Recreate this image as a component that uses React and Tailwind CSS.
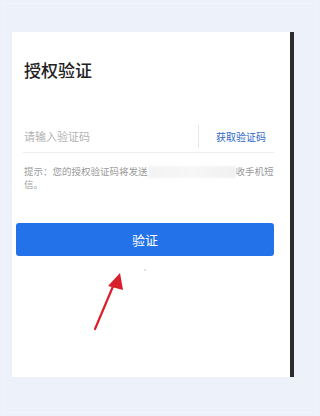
import React from "react";

// Auth verification card with annotation arrow
export default function App() {
  return (
    <div
      className="relative w-[320px] h-[416px] bg-[#edf1f9] pt-[32px] pl-[12px]"
      style={{ fontFamily: '"Noto Sans CJK SC", "Noto Sans", sans-serif' }}
    >
      {/* faint frame */}
      <div className="absolute left-[3px] top-[3px] w-[313px] h-[410px] border border-[#f2f5fb] pointer-events-none"></div>

      <div className="relative w-[282px] h-[345px] bg-white border-r-4 border-[#2b2b2b] flex flex-col">
        <h1 className="mt-[26px] ml-[12px] text-[17px] leading-[24px] font-medium text-[#222]">授权验证</h1>

        {/* code input */}
        <div className="mt-[39px] ml-[11px] w-[251px] h-[32px] border-b border-[#eceef2] flex items-center">
          <span className="flex-1 pl-[1px] text-[11px] text-[#b3b3b3]">请输入验证码</span>
          <div className="w-px h-[23px] bg-[#e6e6e6]"></div>
          <span className="ml-[17px] mr-[8px] text-[10px] text-[#2f69c6]">获取验证码</span>
        </div>

        {/* hint */}
        <p className="mt-[12px] ml-[12px] w-[252px] text-[9.5px] leading-[13px] text-[#9a9a9a]">
          提示：您的授权验证码将发送
          <span className="inline-block align-middle w-[88px] h-[12px] bg-gradient-to-r from-[#f3f3f3] via-[#f7f7f7] to-[#f0f0f0] blur-[1px]"></span>
          收手机短信。
        </p>

        <button className="mt-[32px] ml-[4px] w-[258px] h-[33px] rounded-[3px] bg-[#2372ea] text-white text-[13px]">
          验证
        </button>
      </div>

      {/* red annotation arrow */}
      <svg className="absolute left-0 top-0" width="320" height="416" viewBox="0 0 320 416">
        <circle cx="145" cy="270" r="0.8" fill="#bbb" />
        <line x1="95" y1="329" x2="114" y2="284" stroke="#d91f2a" strokeWidth="2.2" strokeLinecap="round" />
        <polygon points="120,273 108,286 123,290" fill="#d91f2a" />
      </svg>
    </div>
  );
}
